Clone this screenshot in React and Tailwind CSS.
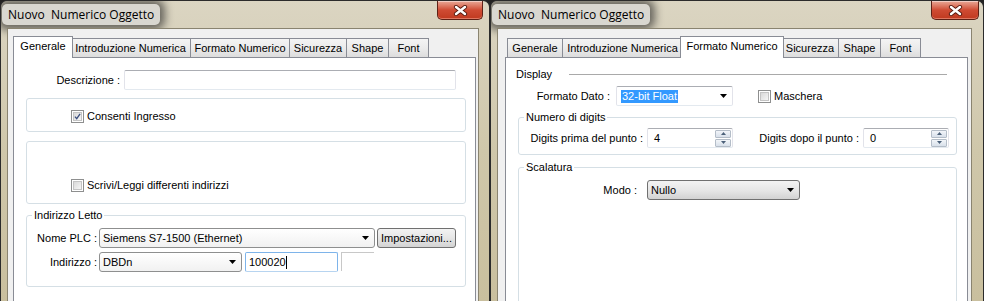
import React from "react";

const TABS = ["Generale", "Introduzione Numerica", "Formato Numerico", "Sicurezza", "Shape", "Font"];
const TAB_W = ["w-[56px]", "w-[121px]", "w-[100px]", "w-[58px]", "w-[43px]", "w-[41px]"];
const TAB_WA = ["w-[60px]", "w-[125px]", "w-[104px]", "w-[62px]", "w-[47px]", "w-[45px]"];

function Arrow() {
  return (
    <svg width="7" height="4" viewBox="0 0 7 4" className="shrink-0">
      <path d="M0 0 H7 L3.5 4 Z" fill="#000" />
    </svg>
  );
}

function CloseBtn({ cls }) {
  return (
    <div
      className={`${cls} h-[19px] flex items-center justify-center rounded-b-[5px] border border-t-0 border-[#5e2116] bg-gradient-to-b from-[#e8a897] via-[#cf4b33] to-[#c0391f] shadow-[inset_0_1px_0_rgba(255,255,255,0.45),inset_0_-1px_0_rgba(255,180,160,0.5)]`}
    >
      <svg width="15" height="11" viewBox="0 0 15 11">
        <path d="M3 2 L12 9 M12 2 L3 9" stroke="#5a1d12" strokeWidth="4.2" strokeLinecap="round" />
        <path d="M3 2 L12 9 M12 2 L3 9" stroke="#ffffff" strokeWidth="2.4" strokeLinecap="round" />
      </svg>
    </div>
  );
}

function Tabs({ active }) {
  return (
    <div className="flex items-end h-[21px] pl-[2px]">
      {TABS.map((t, i) =>
        i === active ? (
          <div
            key={t}
            className={`${TAB_WA[i]} ${i === 0 ? "-ml-[2px]" : "-ml-[3px]"} -mr-[2px] relative z-10 h-[22px] -mb-px bg-white border border-b-0 border-[#898c95] flex justify-center pt-[3px] leading-[13px]`}
          >
            {t}
          </div>
        ) : (
          <div
            key={t}
            className={`${TAB_W[i]} ${i === 0 ? "" : "-ml-px"} h-[19px] border border-b-0 border-[#898c95] bg-gradient-to-b from-[#f4f4f4] via-[#ebebeb] to-[#dddddd] flex justify-center pt-[3px] leading-[13px]`}
          >
            {t}
          </div>
        )
      )}
    </div>
  );
}

function Window({ outer, client, closeCls, active, children }) {
  return (
    <div className={`${outer} h-[301px] shrink-0 flex flex-col overflow-hidden rounded-t-[7px] border border-b-0 border-[#2b2b2b] bg-gradient-to-b from-[#dbd5c2] via-[#cfc7aa] to-[#c9bf9e]`}>
      <div className="h-[27px] shrink-0 flex items-start justify-between">
        <div className="ml-[1px] mt-[3px] h-[21px] px-[6px] flex items-center rounded-[5px] bg-[#d9d7d0] shadow-[0_0_8px_5px_rgba(28,28,28,0.6)] text-[12px] text-black font-['Open_Sans','Noto_Sans',sans-serif] whitespace-pre">
          {"Nuovo  Numerico Oggetto"}
        </div>
        <CloseBtn cls={closeCls} />
      </div>
      <div className={`${client} flex-1 min-h-0 overflow-hidden border border-b-0 border-[#8a8470] bg-[#f0f0f0] pt-[7px]`}>
        <Tabs active={active} />
        <div className="h-[260px] border border-[#898c95] bg-white">{children}</div>
      </div>
    </div>
  );
}

function CheckBox({ checked }) {
  return (
    <div className="w-[13px] h-[13px] shrink-0 border border-[#8e8f8f] bg-white p-px">
      <div className="w-full h-full border border-[#c4c4c4] bg-gradient-to-br from-[#d9d9d9] to-[#f6f6f6] flex items-center justify-center">
        {checked && (
          <svg width="9" height="9" viewBox="0 0 9 9">
            <path d="M1.2 4.6 L3.5 7.2 L7.8 1.2" fill="none" stroke="#3b4f7f" strokeWidth="1.7" />
          </svg>
        )}
      </div>
    </div>
  );
}

function TextBox({ cls, children }) {
  return (
    <div className={`${cls} h-[20px] shrink-0 flex items-center px-[3px] bg-white rounded-[2px] border border-[#abadb3] border-l-[#e2e3ea] border-r-[#e2e3ea] border-b-[#e3e9ef]`}>
      {children}
    </div>
  );
}

function Combo({ cls, children }) {
  return (
    <div className={`${cls} h-[20px] shrink-0 flex items-center justify-between pl-[3px] pr-[5px] rounded-[3px] border border-[#8e8f8f] bg-gradient-to-b from-[#ffffff] to-[#f1f1f1]`}>
      <span>{children}</span>
      <Arrow />
    </div>
  );
}

function Spin({ value }) {
  return (
    <div className="w-[86px] h-[20px] shrink-0 flex items-center bg-white border border-[#abadb3] border-l-[#e2e3ea] border-r-[#e2e3ea] border-b-[#e3e9ef] rounded-[2px] pl-[6px] pr-px">
      <span className="flex-1">{value}</span>
      <div className="w-[16px] h-[17px] flex flex-col gap-px">
        <div className="h-[8px] flex items-center justify-center border border-[#b4bdc8] rounded-[1px] bg-gradient-to-b from-[#f2f5f9] to-[#d8e0ea]">
          <svg width="5" height="3" viewBox="0 0 5 3"><path d="M0 3 H5 L2.5 0 Z" fill="#4b6079" /></svg>
        </div>
        <div className="h-[8px] flex items-center justify-center border border-[#b4bdc8] rounded-[1px] bg-gradient-to-b from-[#f2f5f9] to-[#d8e0ea]">
          <svg width="5" height="3" viewBox="0 0 5 3"><path d="M0 0 H5 L2.5 3 Z" fill="#4b6079" /></svg>
        </div>
      </div>
    </div>
  );
}

export default function App() {
  return (
    <div className="w-[984px] h-[301px] overflow-hidden flex bg-[#222222] text-[11px] leading-[13px] text-black font-['Liberation_Sans',Arial,sans-serif]">
      {/* LEFT WINDOW */}
      <Window outer="w-[490px]" client="ml-[6px] mr-[10px] pl-[5px] pr-[2px]" closeCls="w-[46px] mr-[6px]" active={0}>
        <div className="flex items-center mt-[12px]">
          <span className="w-[106px] text-right">Descrizione :</span>
          <TextBox cls="ml-[4px] w-[332px]" />
        </div>
        <div className="ml-[12px] mt-[8px] w-[440px] h-[34px] rounded-[3px] border border-[#d5dfe5] flex items-start pl-[44px] pt-[11px]">
          <CheckBox checked />
          <span className="ml-[3px]">Consenti Ingresso</span>
        </div>
        <div className="ml-[12px] mt-[9px] w-[440px] h-[63px] rounded-[3px] border border-[#d5dfe5] flex items-start pl-[44px] pt-[37px]">
          <CheckBox />
          <span className="ml-[3px]">Scrivi/Leggi differenti indirizzi</span>
        </div>
        <fieldset className="ml-[12px] mt-[5px] w-[440px] h-[78px] rounded-[3px] border border-[#d5dfe5]">
          <legend className="ml-[5px] px-[2px] leading-[13px]">Indirizzo Letto</legend>
          <div className="flex items-center mt-[6px]">
            <span className="w-[70px] text-right">Nome PLC :</span>
            <Combo cls="ml-[2px] w-[276px]">Siemens S7-1500 (Ethernet)</Combo>
            <div className="ml-[2px] w-[79px] h-[20px] flex items-center justify-center rounded-[3px] border border-[#707070] bg-gradient-to-b from-[#f3f3f3] via-[#e6e6e6] to-[#d3d3d3]">
              Impostazioni...
            </div>
          </div>
          <div className="flex items-center mt-[4px]">
            <span className="w-[70px] text-right">Indirizzo :</span>
            <Combo cls="ml-[2px] w-[143px]">DBDn</Combo>
            <div className="ml-[3px] w-[93px] h-[20px] flex items-center px-[3px] bg-white rounded-[2px] border border-[#7eb4ea] border-b-[#b7d4f0]">
              <span>100020</span>
              <span className="w-px h-[13px] bg-black" />
            </div>
            <div className="ml-[3px] w-[33px] h-[19px] self-start border-l border-t border-[#c8c8c8]" />
          </div>
        </fieldset>
      </Window>

      {/* RIGHT WINDOW */}
      <Window outer="w-[494px]" client="ml-[6px] mr-[11px] pl-[7px] pr-[3px]" closeCls="w-[48px] mr-[4px]" active={2}>
        <div className="flex items-center mt-[10px] pl-[10px] pr-[20px]">
          <span className="w-[53px]">Display</span>
          <div className="flex-1 h-px bg-[#a9a9a9]" />
        </div>
        <div className="flex items-center mt-[5px]">
          <span className="w-[104px] text-right">Formato Dato :</span>
          <div className="ml-[6px] w-[117px] h-[20px] flex items-center justify-between pl-[4px] pr-[5px] bg-white border border-[#abadb3] border-l-[#e2e3ea] border-r-[#e2e3ea] border-b-[#e3e9ef] rounded-[2px]">
            <span className="bg-[#3399ff] text-white px-px">32-bit Float</span>
            <Arrow />
          </div>
          <div className="ml-[25px] flex items-center">
            <CheckBox />
            <span className="ml-[3px]">Maschera</span>
          </div>
        </div>
        <fieldset className="ml-[12px] mt-[5px] w-[439px] h-[44px] rounded-[3px] border border-[#d5dfe5]">
          <legend className="ml-[5px] px-[2px] leading-[13px]">Numero di digits</legend>
          <div className="flex items-center mt-[4px]">
            <span className="w-[124px] text-right">Digits prima del punto :</span>
            <div className="ml-[4px]"><Spin value="4" /></div>
            <span className="ml-[24px] w-[102px] text-right">Digits dopo il punto :</span>
            <div className="ml-[4px]"><Spin value="0" /></div>
          </div>
        </fieldset>
        <fieldset className="ml-[12px] mt-[6px] w-[439px] h-[160px] rounded-[3px] border border-[#d5dfe5]">
          <legend className="ml-[5px] px-[2px] leading-[13px]">Scalatura</legend>
          <div className="flex items-center mt-[6px]">
            <span className="w-[118px] text-right">Modo :</span>
            <div className="ml-[10px] w-[153px] h-[20px] flex items-center justify-between pl-[3px] pr-[5px] rounded-[3px] border border-[#707070] bg-gradient-to-b from-[#f3f3f3] via-[#e7e7e7] to-[#d2d2d2]">
              <span>Nullo</span>
              <Arrow />
            </div>
          </div>
        </fieldset>
      </Window>
    </div>
  );
}
